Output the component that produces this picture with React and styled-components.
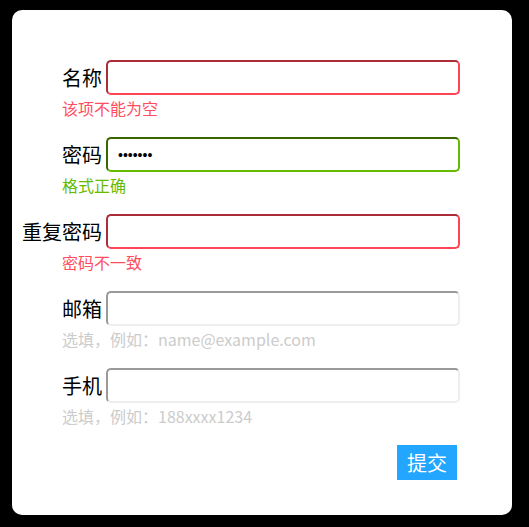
import React, { useEffect, useRef } from "react";
import styled, { createGlobalStyle } from "styled-components";

const GlobalStyle = createGlobalStyle`
  body {
    margin: 0;
    background: #000;
    font-family: "Noto Sans CJK SC", "Noto Sans", sans-serif;
  }
`;

const tones = {
  error: { border: "#ff4455", text: "#ff4d5e" },
  ok: { border: "#66bb00", text: "#66bb00" },
  hint: { border: "#eeeeee", text: "#cccccc" },
};

const Card = styled.form`
  box-sizing: border-box;
  width: 500px;
  height: 505px;
  margin: 10px 0 0 12px;
  padding: 50px 52px 0 50px;
  background: #fff;
  border-radius: 10px;
`;

const Field = styled.div`
  height: 77px;
`;

const Row = styled.div`
  display: flex;
  align-items: center;
`;

const Label = styled.label`
  width: 40px;
  flex-shrink: 0;
  display: flex;
  justify-content: flex-end;
  white-space: nowrap;
  margin-right: 4px;
  font-size: 20px;
  line-height: 28px;
  color: #000;
`;

const Input = styled.input`
  box-sizing: border-box;
  width: 354px;
  height: 35px;
  padding: 0 10px;
  border: 2px inset ${({ $tone }) => tones[$tone].border};
  border-radius: 5px;
  background: #fff;
  font-family: "Liberation Sans", Arial, sans-serif;
  font-size: 14px;
  color: #000;
  caret-color: #000;
  outline: none;
`;

const Message = styled.div`
  margin-top: 2px;
  font-size: 16px;
  line-height: 22px;
  color: ${({ $tone }) => tones[$tone].text};
`;

const Actions = styled.div`
  display: flex;
  justify-content: flex-end;
  padding-right: 3px;
`;

const Submit = styled.button`
  width: 60px;
  height: 35px;
  padding: 0;
  border: none;
  background: #22a6ff;
  color: #fff;
  font-family: inherit;
  font-size: 20px;
`;

const fields = [
  { label: "名称", type: "text", value: "", tone: "error", msg: "该项不能为空" },
  { label: "密码", type: "password", value: "1234567", tone: "ok", msg: "格式正确" },
  { label: "重复密码", type: "password", value: "", tone: "error", msg: "密码不一致" },
  { label: "邮箱", type: "text", value: "", tone: "hint", msg: "选填，例如：name@example.com" },
  { label: "手机", type: "text", value: "", tone: "hint", msg: "选填，例如：188xxxx1234", focus: true },
];

export default function App() {
  const phoneRef = useRef(null);

  useEffect(() => {
    if (phoneRef.current) phoneRef.current.focus();
  }, []);

  return (
    <>
      <GlobalStyle />
      <Card onSubmit={(e) => e.preventDefault()}>
        {fields.map((f, i) => (
          <Field key={i}>
            <Row>
              <Label>{f.label}</Label>
              <Input
                ref={f.focus ? phoneRef : undefined}
                type={f.type}
                defaultValue={f.value}
                $tone={f.tone}
              />
            </Row>
            <Message $tone={f.tone}>{f.msg}</Message>
          </Field>
        ))}
        <Actions>
          <Submit type="submit">提交</Submit>
        </Actions>
      </Card>
    </>
  );
}
